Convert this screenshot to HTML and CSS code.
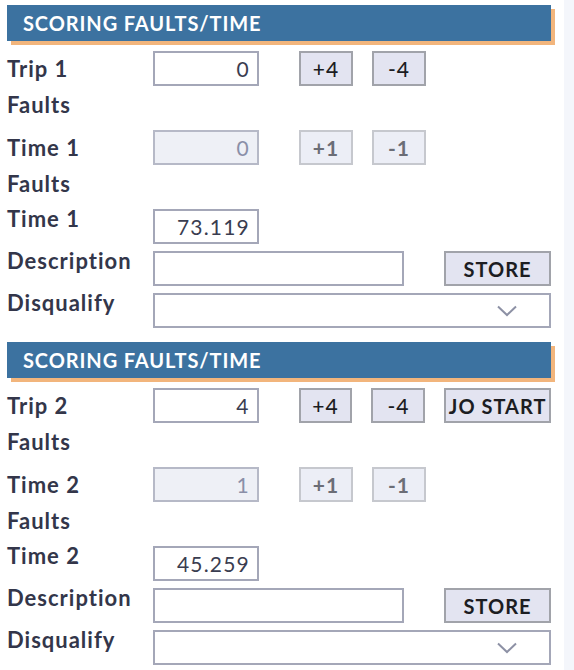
FILE: index.html
```html
<!DOCTYPE html>
<html lang="en">
<head>
<meta charset="utf-8">
<title>Scoring Faults/Time</title>
<link rel="stylesheet" href="styles.css">
</head>
<body>
<div class="page">
  <main class="panel">
    <section class="card">
      <h2 class="head">SCORING FAULTS/TIME</h2>
      <div class="rows">
        <div class="row tall">
          <label class="label">Trip 1 Faults</label>
          <input class="field num" type="text" value="0">
          <button class="btn step">+4</button>
          <button class="btn step gap-s">-4</button>
        </div>
        <div class="row tall">
          <label class="label">Time 1 Faults</label>
          <input class="field num" type="text" value="0" disabled>
          <button class="btn step" disabled>+1</button>
          <button class="btn step gap-s" disabled>-1</button>
        </div>
        <div class="row">
          <label class="label">Time 1</label>
          <input class="field num" type="text" value="73.119">
        </div>
        <div class="row">
          <label class="label">Description</label>
          <input class="field desc" type="text" value="">
          <button class="btn wide">STORE</button>
        </div>
        <div class="row">
          <label class="label">Disqualify</label>
          <div class="select">
            <svg class="chev" width="20" height="12" viewBox="0 0 20 12"><path d="M1 1.5 L10 10 L19 1.5" fill="none" stroke="#8d91a5" stroke-width="2"/></svg>
          </div>
        </div>
      </div>
    </section>
    <section class="card">
      <h2 class="head">SCORING FAULTS/TIME</h2>
      <div class="rows">
        <div class="row tall">
          <label class="label">Trip 2 Faults</label>
          <input class="field num" type="text" value="4">
          <button class="btn step">+4</button>
          <button class="btn step gap-s">-4</button>
          <button class="btn wide gap-s">JO START</button>
        </div>
        <div class="row tall">
          <label class="label">Time 2 Faults</label>
          <input class="field num" type="text" value="1" disabled>
          <button class="btn step" disabled>+1</button>
          <button class="btn step gap-s" disabled>-1</button>
        </div>
        <div class="row">
          <label class="label">Time 2</label>
          <input class="field num" type="text" value="45.259">
        </div>
        <div class="row">
          <label class="label">Description</label>
          <input class="field desc" type="text" value="">
          <button class="btn wide">STORE</button>
        </div>
        <div class="row">
          <label class="label">Disqualify</label>
          <div class="select">
            <svg class="chev" width="20" height="12" viewBox="0 0 20 12"><path d="M1 1.5 L10 10 L19 1.5" fill="none" stroke="#8d91a5" stroke-width="2"/></svg>
          </div>
        </div>
      </div>
    </section>
  </main>
  <aside class="side"></aside>
</div>
</body>
</html>
```
FILE: styles.css
```css
html, body {
  margin: 0;
  padding: 0;
  background: #ffffff;
}
body {
  font-family: Lato, "Noto Sans", sans-serif;
  color: #33364a;
}
.page {
  display: flex;
  height: 670px;
  overflow: hidden;
}
.panel {
  flex: 1;
  padding: 5px 0 0 7px;
  display: flex;
  flex-direction: column;
  gap: 14px;
}
.side {
  width: 10px;
  background: #f4f6fb;
}
.card {
  width: 544px;
}
.head {
  margin: 0 0 10px 0;
  height: 36px;
  line-height: 36px;
  padding-left: 16px;
  background: #3c72a0;
  color: #ffffff;
  font-size: 20px;
  font-weight: 700;
  letter-spacing: 0.9px;
  box-shadow: 4px 4px 0 #f2b57c;
}
.rows {
  display: flex;
  flex-direction: column;
  gap: 7px;
}
.row {
  display: flex;
  align-items: flex-start;
  height: 35px;
}
.row.tall {
  height: 72px;
}
.label {
  width: 126px;
  margin-right: 20px;
  font-size: 22px;
  font-weight: 700;
  letter-spacing: 1px;
  line-height: 20px;
  color: #33364a;
}
.row.tall .label {
  line-height: 36px;
}
.field {
  box-sizing: border-box;
  height: 35px;
  border: 2px solid #a4a7b8;
  background: #ffffff;
  font-family: Lato, sans-serif;
  font-size: 21px;
  letter-spacing: 1.2px;
  color: #3a3d50;
  padding: 0 7px;
  margin: 0;
  outline: none;
}
.field.num {
  width: 106px;
  text-align: right;
}
.field.desc {
  width: 251px;
}
.field:disabled {
  background: #eef0f6;
  border-color: #b6b9c7;
  color: #8a8fa8;
}
.btn {
  box-sizing: border-box;
  height: 35px;
  margin: 0;
  padding: 0;
  border: 2px solid #a1a3aa;
  background: #e3e4f1;
  font-family: Lato, sans-serif;
  font-size: 20px;
  font-weight: 700;
  letter-spacing: 1px;
  color: #1c1d22;
}
.btn.step {
  width: 54px;
  margin-left: 40px;
  font-weight: 500;
  font-size: 21px;
}
.btn.step.gap-s {
  margin-left: 19px;
}
.btn.wide {
  width: 107px;
  margin-left: 40px;
}
.btn.wide.gap-s {
  margin-left: 19px;
}
.btn:disabled {
  background: #eceef6;
  border-color: #c6c8ce;
  color: #6b6d76;
  font-weight: 700;
}
.select {
  box-sizing: border-box;
  width: 398px;
  height: 35px;
  border: 2px solid #a4a7b8;
  background: #ffffff;
  display: flex;
  align-items: center;
  justify-content: flex-end;
  padding-right: 32px;
}
.chev {
  display: block;
}
```
